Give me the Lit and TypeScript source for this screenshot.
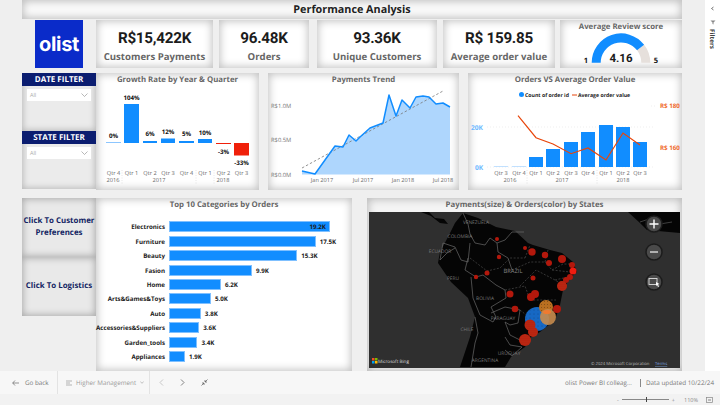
// app.ts — Higher Management report page (olist Power BI)
import { LitElement, html, svg, css } from 'lit';
import { customElement } from 'lit/decorators.js';

const BLUE = '#118dff';
const RED = '#f0200a';
const ORANGE = '#e8450a';

// page coordinates are used as viewBox units in every chart
const growth = [
  { x: 106, w: 15, v: '0%', top: 142, bottom: 143, ly: 138, c: '#8cc6ff' },
  { x: 124, w: 15, v: '104%', top: 104, bottom: 143, ly: 99.5, c: BLUE },
  { x: 143, w: 14, v: '6%', top: 141, bottom: 143, ly: 136, c: BLUE },
  { x: 161, w: 14, v: '12%', top: 138.5, bottom: 143, ly: 134, c: BLUE },
  { x: 179, w: 15, v: '5%', top: 141, bottom: 143, ly: 136, c: BLUE },
  { x: 198, w: 14, v: '10%', top: 139, bottom: 143, ly: 134.5, c: BLUE },
  { x: 216, w: 15, v: '-3%', top: 143, bottom: 144, ly: 153.5, c: RED },
  { x: 234, w: 15, v: '-33%', top: 143, bottom: 155.5, ly: 165, c: RED },
];

const trend = [
  [302, 171], [315, 174], [335, 146], [343, 147], [349, 135], [356, 141], [360, 137],
  [370, 128], [383, 123], [389, 95], [396, 116], [402, 100], [410, 108], [416, 97],
  [423, 96], [429, 97], [436, 104], [443, 103], [450, 107],
];

const orders = [
  { x: 501, top: 166.3, q: 'Qtr 3', c: '#a8d4ff' },
  { x: 519, top: 166.3, q: 'Qtr 4', c: '#a8d4ff' },
  { x: 536, top: 157, q: 'Qtr 1', c: BLUE },
  { x: 553, top: 149, q: 'Qtr 2', c: BLUE },
  { x: 571, top: 142, q: 'Qtr 3', c: BLUE },
  { x: 588, top: 132, q: 'Qtr 4', c: BLUE },
  { x: 606, top: 125, q: 'Qtr 1', c: BLUE },
  { x: 623, top: 127, q: 'Qtr 2', c: BLUE },
  { x: 640, top: 142, q: 'Qtr 3', c: BLUE },
];
const avgLine = '518,115.7 536,137.7 553,144 571,153.7 588,148 606,160 623,133 640,145';

const categories: [string, number][] = [
  ['Electronics', 19.2], ['Furniture', 17.5], ['Beauty', 15.3], ['Fasion', 9.9], ['Home', 6.2],
  ['Arts&Games&Toys', 5.0], ['Auto', 3.8], ['Accessories&Suppliers', 3.6], ['Garden_tools', 3.4], ['Appliances', 1.9],
];

const bubbles: [number, number, number][] = [
  [497, 239, 2], [499, 257, 2.2], [525, 248, 2], [532, 252, 3.7], [545, 255, 3.2], [562, 259, 4],
  [549, 263, 3], [572, 265, 3], [570, 277, 3], [566, 280, 3], [533, 278, 2.5],
  [487, 273, 2.5], [476, 277, 2.2], [510, 294, 3.5], [535, 294, 4], [531, 297, 4], [515, 309, 3.3],
  [557, 309, 4],
];
// the bigger red bubbles carry a dotted fill
const dottedBubbles: [number, number, number][] = [
  [562, 286, 5], [530, 325, 5.5], [533, 332, 5], [525, 340, 6],
];

const borders = [
  '463,213 468,224 470,234 475,243 485,245 490,238 497,243 505,240 512,232 524,232',
  '443,243 455,247 461,260 468,262 470,243',
  '443,243 440,260 447,253 455,248',
  '468,258 465,270 476,277 483,275 496,285 505,290 506,298 491,307 496,317 493,322 480,315 473,298 471,277',
  '475,317 478,333 475,343 471,367',
  '491,313 505,307 520,310 518,323 510,325 505,322 510,335 520,340',
  '505,337 510,345 522,347 512,356 505,350',
  '497,243 498,252 508,258 512,270',
];
const stateLines = [
  '470,258 487,271 500,268 510,258 525,258',
  '512,270 530,262 545,262 552,270 570,272',
  '520,286 536,270 555,280 563,285',
  '505,290 525,286 530,300 545,300 556,300',
  '520,310 530,318 545,322',
  '525,258 530,245',
  '545,262 548,250',
  '555,280 572,276',
  '552,270 563,264 574,264',
];

const nf = (v: number) => v.toFixed(1) + 'K';

@customElement('app-root')
export class AppRoot extends LitElement {
  static styles = css`
    :host {
      display: block;
      width: 720px;
      height: 405px;
      overflow: hidden;
      background: #efefef;
      font-family: 'Open Sans', 'Liberation Sans', sans-serif;
      text-rendering: geometricPrecision;
      color: #111;
    }
    .page { display: flex; flex-direction: column; height: 405px; }
    .top { display: flex; height: 371px; }
    .report { width: 660px; margin-left: 22px; display: flex; flex-direction: column; }
    .card {
      background: #fff;
      box-shadow: inset 0 0 8px 1px rgba(0, 0, 0, 0.26);
      display: flex;
      flex-direction: column;
      box-sizing: border-box;
    }
    .headline {
      height: 19px;
      align-items: center;
      justify-content: center;
      font-size: 10.8px;
      font-weight: 700;
      color: #222;
      background: #fafafa;
    }
    .row { display: flex; }
    .kpis { height: 48px; margin-top: 1px; }
    .side { width: 74px; flex: none; display: flex; flex-direction: column; }
    .logo-slot { align-items: center; }
    .logo {
      width: 48px;
      height: 48px;
      background: #0a2bc9;
      color: #fff;
      display: flex;
      align-items: center;
      justify-content: center;
      font-family: 'Inter', sans-serif;
      font-size: 20px;
      font-weight: 700;
      letter-spacing: -0.3px;
    }
    .kpi { align-items: center; justify-content: center; }
    .kpi-payments { width: 117px; margin-right: 6px; }
    .kpi-orders { width: 90px; margin-right: 8px; }
    .kpi-customers { width: 120px; margin-right: 6px; }
    .kpi-value { width: 112px; margin-right: 5px; }
    .kpi-gauge { width: 122px; justify-content: flex-start; }
    .value { font-family: 'Roboto', sans-serif; font-size: 15.2px; font-weight: 700; letter-spacing: -0.25px; line-height: 20px; color: #1c1c1c; margin-top: 3px; }
    .label { font-size: 9.6px; font-weight: 700; line-height: 14px; color: #666; margin-top: 2px; white-space: nowrap; }
    .title { height: 13px; line-height: 14px; font-size: 7.8px; font-weight: 700; color: #666; text-align: center; flex: none; white-space: nowrap; }
    .charts { height: 117px; margin-top: 5px; }
    .growth { width: 163px; margin-right: 9px; }
    .payments { width: 191px; margin-right: 9px; }
    .combo { width: 214px; }
    .card svg { display: block; flex: none; }
    .slicer {
      height: 58px;
      box-sizing: border-box;
      background: #ebebeb;
      box-shadow: inset 0 0 6px 1px rgba(0, 0, 0, 0.22);
    }
    .slicer-head {
      height: 13px;
      background: #0b1d70;
      color: #fff;
      font-size: 8px;
      font-weight: 700;
      line-height: 13px;
      text-align: center;
    }
    .dropdown {
      margin: 3px 5px 0;
      height: 12px;
      background: #fff;
      display: flex;
      align-items: center;
      justify-content: space-between;
      padding: 0 3px;
      font-size: 5.5px;
      color: #aaa;
    }
    .lower { height: 173px; margin-top: 8px; }
    .jump {
      height: 59px;
      display: flex;
      align-items: center;
      justify-content: center;
      text-align: center;
      white-space: nowrap;
      background: #e9e9e9;
      box-shadow: inset 0 0 7px 1px rgba(0, 0, 0, 0.28);
      color: #131f63;
      font-size: 7.9px;
      font-weight: 700;
      line-height: 11.5px;
    }
    .top10 { width: 256px; margin-right: 15px; }
    .bars { display: grid; grid-auto-rows: 14.44px; padding-top: 8.5px; }
    .bar-row { display: grid; grid-template-columns: 69px 1fr; column-gap: 4px; align-items: center; font-size: 6.2px; font-weight: 700; color: #1a1a1a; }
    .bar-name { text-align: right; white-space: nowrap; }
    .bar-track { display: flex; align-items: center; gap: 4px; }
    .bar { height: 11px; background: #118dff; border: 1px solid #7fc0ff; box-sizing: border-box; display: flex; align-items: center; justify-content: flex-end; padding-right: 3px; }
    .map-card { width: 315px; align-items: center; background: #f4f4f4; }
    .map { margin-top: 1px; }
    .pane {
      width: 15px;
      margin-left: 23px;
      flex: none;
      background: #fff;
      display: flex;
      flex-direction: column;
      align-items: center;
      padding-top: 6px;
      box-sizing: border-box;
    }
    .pane-title { writing-mode: vertical-rl; font-size: 6.4px; font-weight: 700; color: #444; margin-top: 4px; }
    .pane-funnel { margin-top: 9px; }
    .nav {
      height: 23px;
      background: #f7f7f7;
      display: flex;
      align-items: stretch;
      font-size: 6.3px;
      color: #777;
    }
    .nav-item { display: flex; align-items: center; box-sizing: border-box; border-right: 1px solid #e3e3e3; }
    .nav-back { width: 58px; padding-left: 12px; gap: 6px; }
    .nav-pages { width: 92px; padding-left: 8px; gap: 4px; white-space: nowrap; color: #999; }
    .nav-arrows { display: flex; align-items: center; gap: 16px; padding-left: 9px; }
    .nav-right { margin-left: auto; display: flex; align-items: center; padding-right: 6px; white-space: nowrap; }
    .nav-sep { width: 1px; height: 8px; background: #888; margin: 0 5px 0 8px; }
    .status {
      flex: 1;
      display: flex;
      align-items: center;
      justify-content: flex-end;
      gap: 3px;
      padding-right: 7px;
      font-size: 5.5px;
      color: #888;
      background: #f2f2f2;
    }
    .zoom-track { width: 47px; height: 1px; background: #888; position: relative; }
    .zoom-thumb { position: absolute; left: 24px; top: -2px; width: 1.5px; height: 5px; background: #444; }
    .zoom-pct { margin: 0 5px 0 6px; }
    .c-axis { font-size: 5.6px; fill: #666; text-anchor: middle; }
    .c-axis-l { font-size: 5.8px; fill: #777; text-anchor: start; }
    .c-val { font-size: 6.2px; font-weight: 700; fill: #111; text-anchor: middle; }
    .c-legend { font-size: 5.2px; font-weight: 700; fill: #222; }
    .c-blue { font-size: 6.6px; font-weight: 700; fill: #6db8ff; }
    .c-orange { font-size: 6.2px; font-weight: 700; fill: #ef6a2e; }
    .g-num { font-size: 7.5px; font-weight: 700; fill: #111; text-anchor: middle; }
    .g-val { font-family: 'Roboto', sans-serif; font-size: 11.5px; font-weight: 700; fill: #1c1c1c; text-anchor: middle; }
    .m-label { font-size: 4.8px; fill: #777; text-anchor: middle; }
    .m-brazil { font-size: 5.8px; fill: #888; text-anchor: middle; }
    .m-bing { font-size: 4.6px; fill: #ddd; }
    .m-copy { font-size: 4.2px; fill: #bbb; }
    .m-terms { font-size: 4.2px; fill: #7ea6e0; text-decoration: underline; }
  `;

  private quarterAxis(items: { x: number; q: string }[], years: [string, number][], sep: number[]) {
    return svg`
      ${items.map((i) => svg`<text class="c-axis" x=${i.x} y="175">${i.q}</text>`)}
      ${years.map(([y, x]) => svg`<text class="c-axis" x=${x} y="182">${y}</text>`)}
      ${sep.map((x) => svg`<line x1=${x} x2=${x} y1="170" y2="185" stroke="#ccc" stroke-width=".5" stroke-dasharray="1 1.5"/>`)}
    `;
  }

  private renderGrowth() {
    const qs = ['Qtr 4', 'Qtr 1', 'Qtr 2', 'Qtr 3', 'Qtr 4', 'Qtr 1', 'Qtr 2', 'Qtr 3'];
    const axis = growth.map((b, i) => ({ x: b.x + b.w / 2, q: qs[i] }));
    return html`<svg width="163" height="104" viewBox="96 86 163 104">
      ${growth.map(
        (b) => svg`
          <rect x=${b.x} y=${b.top} width=${b.w} height=${b.bottom - b.top} fill=${b.c}/>
          <text class="c-val" x=${b.x + b.w / 2} y=${b.ly}>${b.v}</text>`
      )}
      ${this.quarterAxis(axis, [['2016', 113], ['2017', 159], ['2018', 223]], [122, 196, 214])}
    </svg>`;
  }

  private renderTrend() {
    const line = trend.map((p) => p.join(',')).join(' ');
    return html`<svg width="191" height="104" viewBox="268 86 191 104">
      <polygon points="${line} 450,174.5 302,174.5" fill="#aed6fd"/>
      <line x1="302" y1="168" x2="443" y2="91" stroke="#777" stroke-width=".8" stroke-dasharray="2.5 2"/>
      <polyline points=${line} fill="none" stroke=${BLUE} stroke-width="1.5" stroke-linejoin="round"/>
      <text class="c-axis-l" x="271" y="107.5">R$1.0M</text>
      <text class="c-axis-l" x="271" y="141.5">R$0.5M</text>
      <text class="c-axis-l" x="271" y="177">R$0.0M</text>
      ${[['Jan 2017', 322], ['Jul 2017', 363], ['Jan 2018', 403], ['Jul 2018', 443]].map(
        ([t, x]) => svg`<text class="c-axis" x=${x} y="182">${t}</text>`
      )}
    </svg>`;
  }

  private renderCombo() {
    return html`<svg width="214" height="104" viewBox="468 86 214 104">
      <circle cx="521.5" cy="94.5" r="2.5" fill=${BLUE}/>
      <text class="c-legend" x="525" y="96.5">Count of order id</text>
      <line x1="572" x2="577" y1="95" y2="95" stroke=${ORANGE} stroke-width="1"/>
      <text class="c-legend" x="578" y="96.5">Average order value</text>
      <line x1="487" x2="653" y1="127" y2="127" stroke="#ddd" stroke-width=".5" stroke-dasharray="1 2"/>
      <line x1="487" x2="653" y1="167" y2="167" stroke="#ddd" stroke-width=".5" stroke-dasharray="1 2"/>
      <line x1="651" x2="656" y1="106" y2="106" stroke="#ddd" stroke-width=".5" stroke-dasharray="1 2"/>
      ${orders.map(
        (o) => svg`<rect x=${o.x - 7} y=${o.top} width="14" height=${167 - o.top} fill=${o.c}/>`
      )}
      <polyline points=${avgLine} fill="none" stroke=${ORANGE} stroke-width="1.2"/>
      <text class="c-blue" x="471" y="129.5">20K</text>
      <text class="c-blue" x="475" y="169.5">0K</text>
      <text class="c-orange" x="660" y="108">R$ 180</text>
      <text class="c-orange" x="660" y="149.5">R$ 160</text>
      ${this.quarterAxis(orders, [['2016', 510], ['2017', 562], ['2018', 623]], [527, 597])}
    </svg>`;
  }

  private renderGauge() {
    // half ring, 79% filled for 4.16 on a 1–5 scale
    const cx = 621, cy = 62.7, r = 24.8;
    const a = Math.PI * (1 - (4.16 - 1) / 4);
    const ex = cx + r * Math.cos(a), ey = cy - r * Math.sin(a);
    return html`<svg width="122" height="35" viewBox="560 33 122 35">
      <path d="M${ex} ${ey} A${r} ${r} 0 0 1 ${cx + r} ${cy}" fill="none" stroke="#e6e0dc" stroke-width="9"/>
      <path d="M${cx - r} ${cy} A${r} ${r} 0 0 1 ${ex} ${ey}" fill="none" stroke=${BLUE} stroke-width="9"/>
      <text class="g-num" x="586" y="63">1</text>
      <text class="g-val" x=${cx} y="61.5">4.16</text>
      <text class="g-num" x="656" y="63">5</text>
    </svg>`;
  }

  private renderMap() {
    const land =
      '463,213 478,218 496,227 515,231 528,243 533,245 550,250 562,253 573,262 577,272 570,278 563,290 560,305 555,320 540,332 530,338 525,347 511,357 505,367 460,367 470,337 475,317 468,298 451,282 438,263 440,252 448,237 455,223';
    return html`<svg class="map" width="311" height="156" viewBox="369 212 311 156">
      <defs>
        <pattern id="dots-red" width="2" height="2" patternUnits="userSpaceOnUse">
          <rect width="2" height="2" fill="#b3180c"/><circle cx="1" cy="1" r=".4" fill="#e8903c"/>
        </pattern>
        <pattern id="dots-blue" width="4" height="4" patternUnits="userSpaceOnUse">
          <rect width="4" height="4" fill="#1668c4"/><circle cx="2" cy="2" r=".4" fill="#0a2a55"/>
        </pattern>
        <pattern id="dots-amber" width="3" height="3" patternUnits="userSpaceOnUse">
          <rect width="3" height="3" fill="#b96f20"/><circle cx="1.5" cy="1.5" r=".4" fill="#4a2a10"/>
        </pattern>
      </defs>
      <rect x="369" y="212" width="311" height="156" fill="#2f2f2f"/>
      <polygon points=${land} fill="#050505"/>
      <polygon points="421,212 431,216 440,223 448,224 444,219 435,218 429,212" fill="#050505"/>
      <polygon points="628,212 640,223 647,230 680,233 680,212" fill="#050505"/>
      ${borders.map((b) => svg`<polyline points=${b} fill="none" stroke="#6a6a6a" stroke-width=".7"/>`)}
      ${stateLines.map((b) => svg`<polyline points=${b} fill="none" stroke="#555" stroke-width=".6" stroke-dasharray="2 1.5"/>`)}
      <polyline points="640,222 652,218 660,224 672,222" fill="none" stroke="#666" stroke-width=".6"/>
      <text class="m-label" x="476" y="224">VENEZUELA</text>
      <text class="m-label" x="460" y="238">COLOMBIA</text>
      <text class="m-label" x="440" y="253">ECUADOR</text>
      <text class="m-label" x="453" y="280">PERU</text>
      <text class="m-label" x="485" y="300">BOLIVIA</text>
      <text class="m-label" x="503" y="320">PARAGUAY</text>
      <text class="m-label" x="467" y="331">CHILE</text>
      <text class="m-label" x="509" y="355">URUGUAY</text>
      <text class="m-label" x="485" y="362">ARGENTINA</text>
      <text class="m-brazil" x="513" y="273">BRAZIL</text>
      <circle cx="537" cy="319" r="12" fill="url(#dots-blue)"/>
      <circle cx="546" cy="307" r="7" fill="url(#dots-amber)"/>
      <circle cx="548" cy="317" r="8" fill="#c58b4e" fill-opacity=".92"/>
      <ellipse cx="547" cy="312" rx="4" ry="2" fill="#f07a30"/>
      ${bubbles.map(([x, y, r]) => svg`<circle cx=${x} cy=${y} r=${r} fill="#b3180c"/>`)}
      ${dottedBubbles.map(([x, y, r]) => svg`<circle cx=${x} cy=${y} r=${r} fill="url(#dots-red)"/>`)}
      <circle cx="573" cy="271" r="3.5" fill="#f01c10"/>
      <rect x="372" y="358" width="2.5" height="2.5" fill="#f25022"/>
      <rect x="375" y="358" width="2.5" height="2.5" fill="#7fba00"/>
      <rect x="372" y="361" width="2.5" height="2.5" fill="#00a4ef"/>
      <rect x="375" y="361" width="2.5" height="2.5" fill="#ffb900"/>
      <text class="m-bing" x="378" y="362.5">Microsoft Bing</text>
      <text class="m-copy" x="591" y="365">© 2024 Microsoft Corporation</text>
      <text class="m-terms" x="655" y="365">Terms</text>
      ${[224, 252, 282].map(
        (y) => svg`<circle cx="654" cy=${y} r="8" fill="#4a4a4a" stroke="#1c1c1c" stroke-width="1.5"/>`
      )}
      <path d="M649.5 224h9M654 219.5v9" stroke="#fff" stroke-width="1.4"/>
      <path d="M650 252h8" stroke="#ddd" stroke-width="1.4"/>
      <rect x="649" y="278.5" width="8" height="6" fill="none" stroke="#ddd" stroke-width=".9"/>
      <path d="M656 282l3.5 2-1.5.5 1 2-1 .4-.9-2-1.1 1z" fill="#fff"/>
    </svg>`;
  }

  private slicer(name: string) {
    return html`<div class="slicer">
      <div class="slicer-head">${name}</div>
      <div class="dropdown">
        <span>All</span>
        <svg width="7" height="4" viewBox="0 0 7 4"><path d="M.5.5l3 3 3-3" fill="none" stroke="#999" stroke-width=".7"/></svg>
      </div>
    </div>`;
  }

  render() {
    return html`<div class="page">
      <div class="top">
        <div class="report">
          <div class="card headline">Performance Analysis</div>

          <div class="row kpis">
            <div class="side logo-slot"><div class="logo">olist</div></div>
            <div class="card kpi kpi-payments"><div class="value">R$15,422K</div><div class="label">Customers Payments</div></div>
            <div class="card kpi kpi-orders"><div class="value">96.48K</div><div class="label">Orders</div></div>
            <div class="card kpi kpi-customers"><div class="value">93.36K</div><div class="label">Unique Customers</div></div>
            <div class="card kpi kpi-value"><div class="value">R$ 159.85</div><div class="label">Average order value</div></div>
            <div class="card kpi kpi-gauge"><div class="title">Average Review score</div>${this.renderGauge()}</div>
          </div>

          <div class="row charts">
            <div class="side">${this.slicer('DATE FILTER')}${this.slicer('STATE FILTER')}</div>
            <div class="card growth"><div class="title">Growth Rate by Year &amp; Quarter</div>${this.renderGrowth()}</div>
            <div class="card payments"><div class="title">Payments Trend</div>${this.renderTrend()}</div>
            <div class="card combo"><div class="title">Orders VS Average Order Value</div>${this.renderCombo()}</div>
          </div>

          <div class="row lower">
            <div class="side">
              <div class="jump">Click To Customer<br />Preferences</div>
              <div class="jump">Click To Logistics</div>
            </div>
            <div class="card top10">
              <div class="title">Top 10 Categories by Orders</div>
              <div class="bars">
                ${categories.map(
                  ([name, v], i) => html`<div class="bar-row">
                    <span class="bar-name">${name}</span>
                    <div class="bar-track">
                      <div class="bar" style="width:${v * 8.38}px">${i === 0 ? nf(v) : ''}</div>
                      ${i === 0 ? '' : html`<span>${nf(v)}</span>`}
                    </div>
                  </div>`
                )}
              </div>
            </div>
            <div class="card map-card"><div class="title">Payments(size) &amp; Orders(color) by States</div>${this.renderMap()}</div>
          </div>
        </div>

        <div class="pane">
          <svg width="5" height="5" viewBox="0 0 5 5"><path d="M3.5 1L1.5 2.5 3.5 4" fill="none" stroke="#555" stroke-width=".8"/></svg>
          <svg class="pane-funnel" width="6" height="5" viewBox="0 0 6 5"><path d="M.5.5h5L3.5 2.6V4.6L2.5 4V2.6z" fill="#888"/></svg>
          <div class="pane-title">Filters</div>
        </div>
      </div>

      <div class="nav">
        <div class="nav-item nav-back">
          <svg width="7" height="6" viewBox="0 0 7 6"><path d="M3 .5L.7 3 3 5.5M.7 3H7" fill="none" stroke="#666" stroke-width=".7"/></svg>
          <span>Go back</span>
        </div>
        <div class="nav-item nav-pages">
          <svg width="6" height="6" viewBox="0 0 6 6"><path d="M0 1h6M0 3h4M0 5h6" stroke="#888" stroke-width=".6"/></svg>
          <span>Higher Management</span>
          <svg width="4" height="3" viewBox="0 0 4 3"><path d="M.3.5L2 2.3 3.7.5" fill="none" stroke="#888" stroke-width=".5"/></svg>
        </div>
        <div class="nav-arrows">
          <svg width="5" height="7" viewBox="0 0 5 7"><path d="M4 .5L1 3.5 4 6.5" fill="none" stroke="#bbb" stroke-width=".8"/></svg>
          <svg width="5" height="7" viewBox="0 0 5 7"><path d="M1 .5L4 3.5 1 6.5" fill="none" stroke="#666" stroke-width=".8"/></svg>
          <svg width="7" height="7" viewBox="0 0 7 7"><path d="M.5 6.5L3 4M6.5.5L4 3M1 4h2v2M6 3H4V1" fill="none" stroke="#555" stroke-width=".7"/></svg>
        </div>
        <div class="nav-right">
          <span>olist Power BI colleag...</span>
          <div class="nav-sep"></div>
          <span>Data updated 10/22/24</span>
        </div>
      </div>
      <div class="status">
        <span>-</span>
        <div class="zoom-track"><div class="zoom-thumb"></div></div>
        <span>+</span>
        <span class="zoom-pct">110%</span>
        <svg width="7" height="6" viewBox="0 0 7 6"><rect x=".5" y=".5" width="6" height="5" fill="none" stroke="#888" stroke-width=".7"/><rect x="2" y="2" width="3" height="2" fill="#bbb"/></svg>
      </div>
    </div>`;
  }
}
